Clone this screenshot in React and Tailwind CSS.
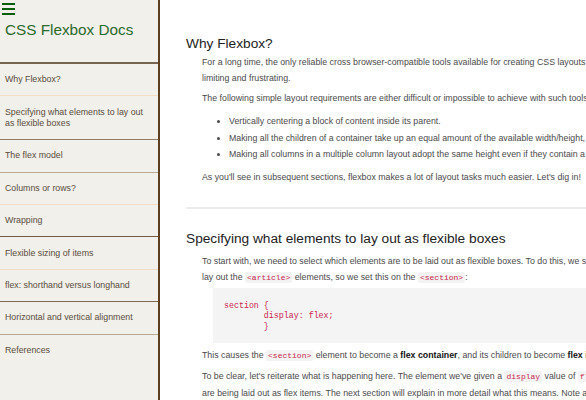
import React from "react";

const navItems = [
  { label: "Why Flexbox?", border: "border-[#f3dcc4]" },
  { label: "Specifying what elements to lay out as flexible boxes", border: "border-[#8c7b68]" },
  { label: "The flex model", border: "border-[#b8a994]" },
  { label: "Columns or rows?", border: "border-[#f3dcc4]" },
  { label: "Wrapping", border: "border-[#6f5a44]" },
  { label: "Flexible sizing of items", border: "border-[#efdcc6]" },
  { label: "flex: shorthand versus longhand", border: "border-[#7d6a55]" },
  { label: "Horizontal and vertical alignment", border: "border-[#b8a994]" },
  { label: "References", border: "border-transparent" },
];

function Code({ children }) {
  return (
    <code className="font-['Liberation_Mono',monospace] text-[8px] text-[#c7254e] bg-[#f3f3f3] rounded-[2px] px-[2px] py-[1px]">
      {children}
    </code>
  );
}

function Sidebar() {
  return (
    <aside className="w-[160px] shrink-0 h-full bg-[#f1f0ea] border-r-2 border-[#5b3f20] flex flex-col">
      <div className="h-[64px] border-b-2 border-[#75644f] pl-[2px] pt-[3px]">
        <div className="flex flex-col gap-[3px] w-[13px]">
          <span className="block h-[2px] bg-[#0b5e0b]" />
          <span className="block h-[2px] bg-[#0b5e0b]" />
          <span className="block h-[2px] bg-[#0b5e0b]" />
        </div>
        <h1 className="pl-[3px] mt-[6px] text-[15.3px] leading-[18px] text-[#2e6a2e]">
          CSS Flexbox Docs
        </h1>
      </div>
      <nav className="flex flex-col">
        {navItems.map((item) => (
          <a
            key={item.label}
            className={`block border-b ${item.border} px-[5px] pt-[10.3px] pb-[9.7px] text-[8.8px] leading-[11.4px] text-[#5a4d40]`}
          >
            {item.label}
          </a>
        ))}
      </nav>
    </aside>
  );
}

export default function App() {
  return (
    <div className="w-[586px] h-[400px] overflow-hidden flex bg-white font-['Liberation_Sans',Arial,sans-serif]">
      <Sidebar />
      <main className="flex-1 min-w-0 overflow-hidden pl-[26px] pt-[35px] text-[8.8px] leading-[16px] text-[#4a4a4a] whitespace-nowrap">
        <h2 className="text-[13.7px] leading-[18px] text-[#222]">Why Flexbox?</h2>
        <div className="pl-[16px] mt-[1px] flex flex-col">
          <p>
            For a long time, the only reliable cross browser-compatible tools available for creating CSS layouts were features like floats and positioning. These work, but in some ways they're also
            <br />
            limiting and frustrating.
          </p>
          <p className="mt-[4px]">
            The following simple layout requirements are either difficult or impossible to achieve with such tools, in any kind of convenient, flexible way:
          </p>
          <ul className="mt-[7px] pl-[27px] list-disc leading-[16.5px]">
            <li>Vertically centering a block of content inside its parent.</li>
            <li>Making all the children of a container take up an equal amount of the available width/height, regardless of how much width/height is available.</li>
            <li>Making all columns in a multiple column layout adopt the same height even if they contain a different amount of content.</li>
          </ul>
          <p className="mt-[6px]">
            As you'll see in subsequent sections, flexbox makes a lot of layout tasks much easier. Let's dig in!
          </p>
        </div>

        <hr className="mt-[22px] border-0 h-[2px] bg-[#ececec]" />

        <h2 className="mt-[21px] text-[13.7px] leading-[18px] text-[#222]">
          Specifying what elements to lay out as flexible boxes
        </h2>
        <div className="pl-[16px] mt-[5px] flex flex-col">
          <p>
            To start with, we need to select which elements are to be laid out as flexible boxes. To do this, we set a special value of display on the parent element of the elements you want to affect.
            <br />
            lay out the <Code>&lt;article&gt;</Code> elements, so we set this on the <Code>&lt;section&gt;</Code>:
          </p>
          <pre className="mt-[2px] ml-[11px] bg-[#f4f4f4] pt-[13px] pb-[11px] pl-[11px] font-['Liberation_Mono',monospace] text-[8.3px] leading-[10.5px] text-[#c7254e] [tab-size:8]">
{`section {
	display: flex;
	}`}
          </pre>
          <p className="mt-[4px]">
            This causes the <Code>&lt;section&gt;</Code> element to become a{" "}
            <b className="text-[#111]">flex container</b>, and its children to become{" "}
            <b className="text-[#111]">flex items</b>.
          </p>
          <p className="mt-[4px]">
            To be clear, let's reiterate what is happening here. The element we've given a <Code>display</Code> value of <Code>flex</Code> to is acting like a block-level element in terms of how it interacts
            <br />
            are being laid out as flex items. The next section will explain in more detail what this means. Note also that you can use a display value of inline-flex.
          </p>
        </div>
      </main>
    </div>
  );
}
